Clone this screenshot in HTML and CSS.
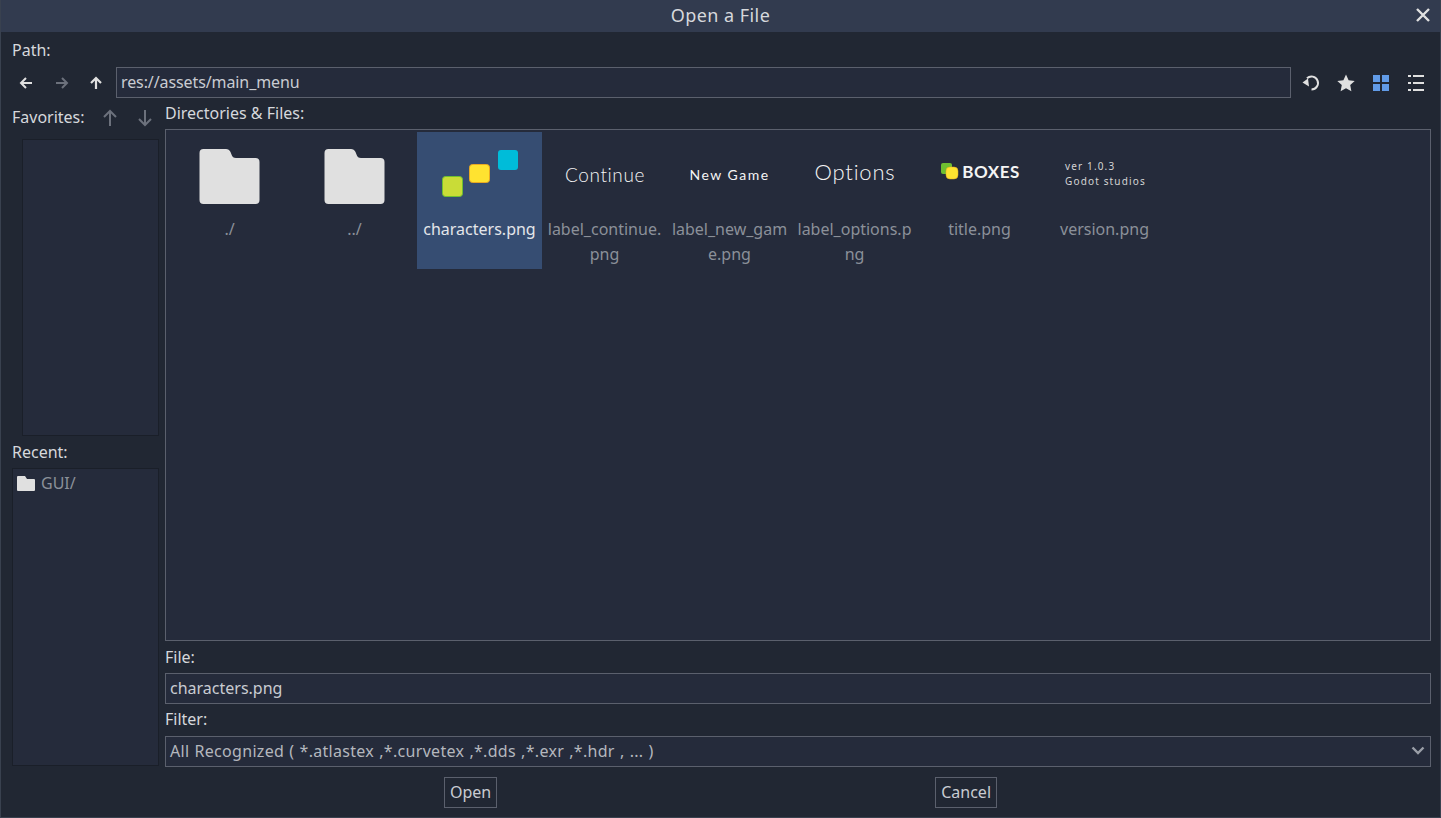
FILE: index.html
```html
<!DOCTYPE html>
<html lang="en">
<head>
    <meta charset="UTF-8">
    <meta name="viewport" content="width=device-width, initial-scale=1.0">
    <title>Open a File</title>
    <link rel="stylesheet" href="styles.css">
</head>
<body>
    <div id="dialog">
        <div id="title-bar">
            <span>Open a File</span>
            <button class="close-btn" aria-label="Close">
                <svg width="16" height="16" viewBox="0 0 16 16"><path d="M2 2 14 14M14 2 2 14" stroke="#e0e0e0" stroke-width="2.4" fill="none"/></svg>
            </button>
        </div>

        <div class="path-label">Path:</div>
        <div id="toolbar">
            <button class="icon-btn">
                <svg width="14" height="14" viewBox="0 0 14 14"><path d="M13 7H3M7 2 2 7l5 5" stroke="#e0e0e0" stroke-width="2" fill="none"/></svg>
            </button>
            <button class="icon-btn nudge">
                <svg width="14" height="14" viewBox="0 0 14 14"><path d="M1 7h10M7 2l5 5-5 5" stroke="#6c717c" stroke-width="2" fill="none"/></svg>
            </button>
            <button class="icon-btn">
                <svg width="14" height="14" viewBox="0 0 14 14"><path d="M7 13V3M2 7l5-5 5 5" stroke="#e0e0e0" stroke-width="2.2" fill="none"/></svg>
            </button>
            <div class="field path-field">res://assets/main_menu</div>
            <button class="icon-btn">
                <svg width="18" height="18" viewBox="0 0 18 18"><path d="M9.500 15.500A6.500 6.500 0 1 0 5 4.300" stroke="#e0e0e0" stroke-width="2" fill="none"/><path d="M.5 8.500 6 4.500 7 12.500Z" fill="#e0e0e0"/></svg>
            </button>
            <button class="icon-btn">
                <svg width="18" height="18" viewBox="0 0 18 18"><path d="M9 .5l2.600 5.700 6.100.7-4.500 4.200 1.200 6.100L9 14.200l-5.400 3 1.200-6.100L.3 6.900l6.100-.7Z" fill="#e0e0e0"/></svg>
            </button>
            <button class="icon-btn">
                <svg width="16" height="16" viewBox="0 0 16 16" fill="#619be8"><rect width="7" height="7"/><rect x="9" width="7" height="7"/><rect y="9" width="7" height="7"/><rect x="9" y="9" width="7" height="7"/></svg>
            </button>
            <button class="icon-btn">
                <svg width="16" height="16" viewBox="0 0 16 16" fill="#e0e0e0"><rect y="0" width="3" height="2"/><rect x="5" y="0" width="11" height="2"/><rect y="7" width="3" height="2"/><rect x="5" y="7" width="11" height="2"/><rect y="14" width="3" height="2"/><rect x="5" y="14" width="11" height="2"/></svg>
            </button>
        </div>

        <div id="main">
            <div id="side">
                <div class="fav-head">
                    <span>Favorites:</span>
                    <svg class="fav-up" width="14" height="18" viewBox="0 0 14 18"><path d="M7 17V2M1 8l6-6 6 6" stroke="#6c717c" stroke-width="2" fill="none"/></svg>
                    <svg class="fav-down" width="14" height="18" viewBox="0 0 14 18"><path d="M7 1v15M1 10l6 6 6-6" stroke="#6c717c" stroke-width="2" fill="none"/></svg>
                </div>
                <div class="side-list fav-list"></div>
                <div class="label recent-label">Recent:</div>
                <div class="side-list recent-list">
                    <div class="recent-item">
                        <svg width="18" height="15" viewBox="0 0 18 15"><path d="M0 1q0-1 1-1h7l2 3h7q1 0 1 1v10q0 1-1 1H1q-1 0-1-1Z" fill="#e0e0e0"/></svg>
                        <span>GUI/</span>
                    </div>
                </div>
            </div>

            <div id="content">
                <div class="label dir-label">Directories &amp; Files:</div>
                <div id="files">
                    <div class="file">
                        <div class="thumb">
                            <svg width="125" height="85" viewBox="0 0 125 85"><use href="#folder"/></svg>
                        </div>
                        <div class="file-name">./</div>
                    </div>
                    <div class="file">
                        <div class="thumb">
                            <svg width="125" height="85" viewBox="0 0 125 85"><use href="#folder"/></svg>
                        </div>
                        <div class="file-name">../</div>
                    </div>
                    <div class="file selected">
                        <div class="thumb">
                            <svg width="125" height="85" viewBox="0 0 125 85">
                                <rect x="25.5" y="44.5" width="20" height="20" rx="3" fill="#c9dc37" stroke="#6fbf30"/>
                                <rect x="52.5" y="32.5" width="20" height="18" rx="3" fill="#ffe330" stroke="#e9a922"/>
                                <rect x="81" y="18" width="20" height="20" rx="3" fill="#00bcd9"/>
                            </svg>
                        </div>
                        <div class="file-name">characters.png</div>
                    </div>
                    <div class="file">
                        <div class="thumb"><span class="img-text continue">Continue</span></div>
                        <div class="file-name">label_continue.png</div>
                    </div>
                    <div class="file">
                        <div class="thumb"><span class="img-text new-game">New Game</span></div>
                        <div class="file-name">label_new_game.png</div>
                    </div>
                    <div class="file">
                        <div class="thumb"><span class="img-text options">Options</span></div>
                        <div class="file-name">label_options.png</div>
                    </div>
                    <div class="file">
                        <div class="thumb boxes">
                            <svg width="18" height="17" viewBox="0 0 18 17">
                                <rect width="11" height="11" rx="2" fill="#6fbf30"/>
                                <rect x="5" y="4" width="12" height="12" rx="4" fill="#ffe330" stroke="#e9a922" stroke-width=".5"/>
                            </svg>
                            <span class="img-text">BOXES</span>
                        </div>
                        <div class="file-name">title.png</div>
                    </div>
                    <div class="file">
                        <div class="thumb">
                            <div class="img-text version">
                                <div>ver 1.0.3</div>
                                <div>Godot studios</div>
                            </div>
                        </div>
                        <div class="file-name">version.png</div>
                    </div>
                </div>
                <div class="label">File:</div>
                <div class="field">characters.png</div>
                <div class="label raised">Filter:</div>
                <div class="field filter">
                    <span>All Recognized ( *.atlastex ,*.curvetex ,*.dds ,*.exr ,*.hdr , ... )</span>
                    <svg width="14" height="10" viewBox="0 0 14 10"><path d="M1.5 1.5 7 7l5.500-5.500" stroke="#9a9ea7" stroke-width="2.4" fill="none"/></svg>
                </div>
            </div>
        </div>

        <div id="buttons">
            <button class="btn">Open</button>
            <button class="btn">Cancel</button>
        </div>
    </div>

    <svg class="defs" width="0" height="0">
        <defs>
            <path id="folder" d="M36.500 17H59q3 0 4.500 3l1 2.500q1 3.500 4.500 3.500H88.500q4 0 4 4V68q0 4-4 4H36.500q-4 0-4-4V21q0-4 4-4Z" fill="#e0e0e0"/>
        </defs>
    </svg>
</body>
</html>
```
FILE: styles.css
```css
:root {
    --bg: #212733;
    --panel: #252b3b;
    --title: #323b4f;
    --line: #5b606d;
    --dark-line: #1a1f29;
    --text: #d6d8dc;
    --dim-text: #8b9099;
    --main-font: "Noto Sans", "Open Sans", sans-serif;
}

* {
    box-sizing: border-box;
    font-family: var(--main-font);
}

body {
    margin: 0;
    background-color: var(--bg);
}

button {
    margin: 0;
    padding: 0;
    border: 0;
    background: none;
    color: inherit;
    font-size: inherit;
}

#dialog {
    display: flex;
    flex-direction: column;
    width: 1441px;
    height: 818px;
    overflow: hidden;
    border: 1px solid #39414f;
    border-top: 0;
    background-color: var(--bg);
    color: var(--text);
    font-size: 16px;
}

#title-bar {
    display: flex;
    align-items: center;
    justify-content: center;
    position: relative;
    flex: none;
    height: 32px;
    padding-bottom: 3px;
    background-color: var(--title);
    font-size: 18px;
    letter-spacing: .45px;
}

.close-btn {
    display: flex;
    position: absolute;
    top: 7px;
    right: 9px;
}

.path-label {
    flex: none;
    height: 35px;
    padding: 6px 0 0 11px;
    line-height: 24px;
}

#toolbar {
    display: flex;
    flex: none;
    height: 31px;
    padding: 0 7px 0 7px;
}

.icon-btn {
    display: flex;
    align-items: center;
    justify-content: center;
    flex: none;
    width: 35px;
    height: 31px;
}

.nudge {
    padding-left: 2px;
}

.field {
    display: flex;
    align-items: center;
    flex: none;
    height: 31px;
    padding: 0 4px 2px;
    border: 1px solid var(--line);
    background-color: var(--panel);
    color: #c9ccd2;
    white-space: nowrap;
}

.path-field {
    flex: 1;
    margin: 0 2px 0 3px;
    letter-spacing: -.1px;
}

#main {
    display: flex;
    flex: 1;
    gap: 6px;
    min-height: 0;
    padding: 0 9px 0 11px;
}

#side {
    display: flex;
    flex-direction: column;
    flex: none;
    width: 147px;
}

.fav-head {
    display: flex;
    align-items: center;
    flex: none;
    height: 38px;
    margin-bottom: 3px;
}

.fav-up {
    margin-left: 18px;
    margin-top: 1px;
}

.fav-down {
    margin-left: 21px;
    margin-top: 1px;
}

.side-list {
    border: 1px solid var(--dark-line);
    background-color: var(--panel);
}

.fav-list {
    flex: none;
    height: 297px;
    margin-left: 10px;
}

.recent-label {
    padding: 0;
}

.recent-list {
    flex: 1;
    margin-bottom: 1px;
}

.recent-item {
    display: flex;
    align-items: center;
    gap: 6px;
    height: 28px;
    padding-left: 4px;
    color: var(--dim-text);
}

#content {
    display: flex;
    flex-direction: column;
    flex: 1;
    min-width: 0;
}

.label {
    display: flex;
    align-items: center;
    flex: none;
    height: 32px;
}

.dir-label {
    height: 31px;
    padding-bottom: 1px;
}

.raised {
    padding-bottom: 2px;
}

#files {
    display: flex;
    align-items: flex-start;
    flex: 1;
    min-height: 0;
    padding: 2px 1px;
    border: 1px solid var(--line);
    background-color: var(--panel);
}

.file {
    flex: none;
    width: 125px;
    height: 137px;
    padding-bottom: 4px;
}

.selected {
    background-color: #364d72;
}

.selected .file-name {
    color: #e4e6ea;
}

.thumb {
    display: flex;
    align-items: center;
    justify-content: center;
    height: 85px;
}

.file-name {
    padding: 0 4px;
    color: var(--dim-text);
    line-height: 24.6px;
    text-align: center;
    word-break: break-all;
}

.img-text {
    color: #f4f4f4;
    font-family: "Lato", sans-serif;
}

.continue {
    margin-left: 1px;
    font-size: 19px;
    font-weight: 300;
    letter-spacing: .6px;
}

.new-game {
    font-size: 14px;
    letter-spacing: 1.5px;
}

.options {
    margin-top: -6px;
    margin-left: 1px;
    font-size: 22px;
    font-weight: 300;
    letter-spacing: .8px;
}

.boxes {
    gap: 3px;
    padding-bottom: 6px;
    padding-left: 2px;
}

.boxes .img-text {
    font-size: 17px;
    font-weight: 700;
    letter-spacing: .5px;
}

.version {
    width: 80px;
    margin-left: 1px;
    margin-top: -1px;
    color: #d4d4d4;
    font-size: 10px;
    line-height: 15px;
    letter-spacing: 1.15px;
    white-space: nowrap;
}

.filter {
    justify-content: space-between;
    padding-right: 5px;
    color: #b4b7be;
    letter-spacing: .3px;
    word-spacing: .7px;
}

#buttons {
    display: flex;
    justify-content: center;
    gap: 438px;
    flex: none;
    height: 50px;
    padding-top: 10px;
    color: #c9ccd2;
}

.btn {
    height: 31px;
    padding: 0 5px 2px;
    border: 1px solid var(--line);
    background-color: var(--bg);
}

.defs {
    position: absolute;
}
```
